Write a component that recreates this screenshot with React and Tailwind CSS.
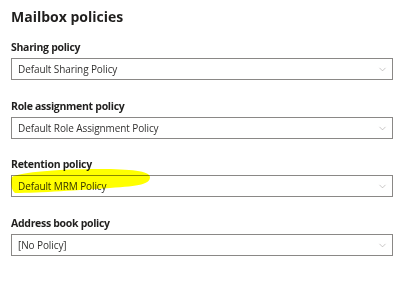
import { ChevronDown } from 'lucide-react';

const fields = [
  { label: 'Sharing policy', value: 'Default Sharing Policy', mt: 'mt-[13px]' },
  { label: 'Role assignment policy', value: 'Default Role Assignment Policy', mt: 'mt-[19px]' },
  { label: 'Retention policy', value: 'Default MRM Policy', mt: 'mt-[18px]' },
  { label: 'Address book policy', value: '[No Policy]', mt: 'mt-[19px]' },
];

function Dropdown({ value }) {
  return (
    <div className="mt-[4px] h-[22px] border border-[#8a8886] bg-white flex items-center pl-[6px] pr-[4px]">
      <span className="flex-1 text-[10px] leading-[14px] tracking-[-0.1px] text-[#323130]">{value}</span>
      <ChevronDown className="w-[11px] h-[11px] text-[#a19f9d]" strokeWidth={1.25} />
    </div>
  );
}

export default function App() {
  return (
    <div className="relative w-[400px] h-[283px] bg-white pl-[11px] pr-[7px] pt-[7px] overflow-hidden"
      style={{ fontFamily: '"Open Sans", "Noto Sans", sans-serif' }}>
      <h1 className="text-[14px] leading-[20px] font-bold text-[#201f1e]">Mailbox policies</h1>

      {fields.map(f => (
        <div key={f.label} className={f.mt}>
          <div className="text-[10.5px] leading-[14px] font-bold tracking-[-0.3px] text-[#201f1e]">{f.label}</div>
          <Dropdown value={f.value} />
        </div>
      ))}

      {/* marker highlight over the retention policy value */}
      <svg className="absolute left-0 top-0 w-[400px] h-[283px] pointer-events-none mix-blend-multiply" viewBox="0 0 400 283">
        <path
          d="M12,177 C20,172 60,169 100,169 C130,169 150,171 150,177 C150,184 140,186 110,188 C80,190 40,193 15,193 C11,190 10,181 12,177 Z"
          fill="#ffff00"
        />
      </svg>
    </div>
  );
}
